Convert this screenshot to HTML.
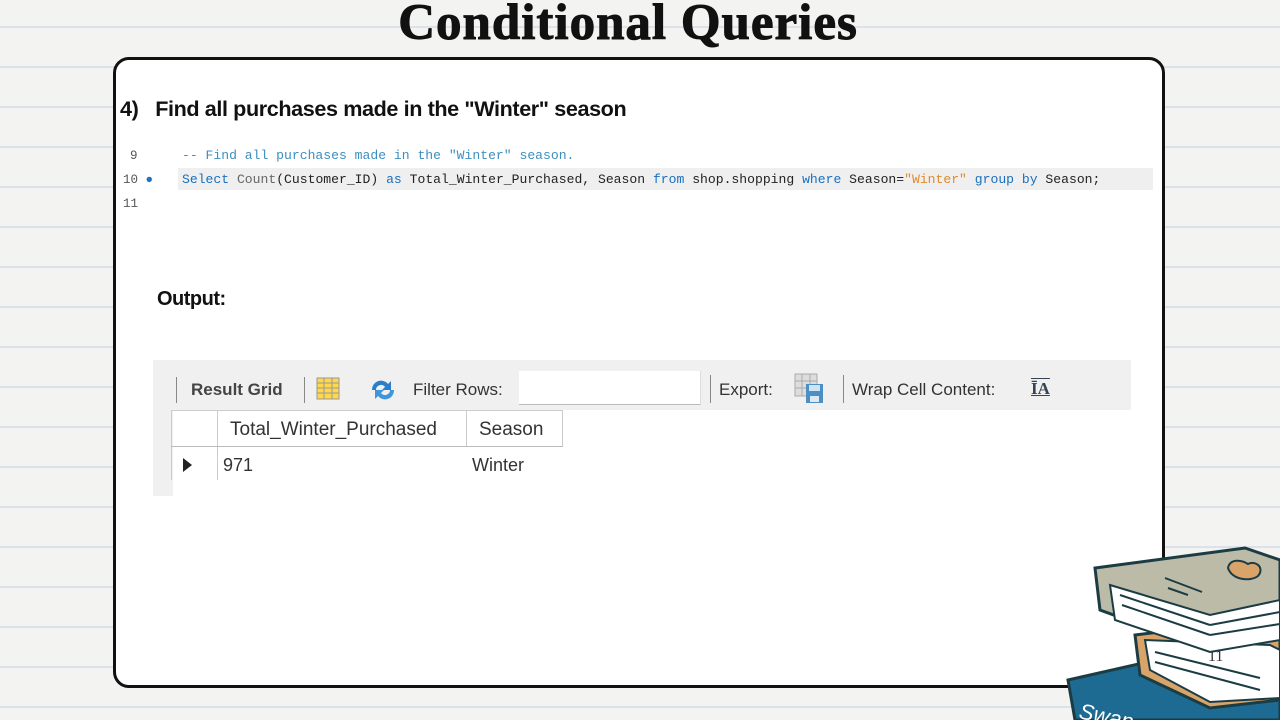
<!DOCTYPE html>
<html><head><meta charset="utf-8"><style>
*{margin:0;padding:0;box-sizing:border-box}
body{width:1280px;height:720px;overflow:hidden;position:relative;background:#f3f3f2;
background-image:repeating-linear-gradient(to bottom,transparent 0,transparent 26px,#dde2ea 26px,#dde2ea 28px,transparent 28px,transparent 40px);font-family:"Liberation Sans",sans-serif}
.t{position:absolute;left:0;width:1256px;text-align:center;top:-6px;font:900 51px "Liberation Serif",serif;color:#111;letter-spacing:1px;-webkit-text-stroke:1px #111}
.card{position:absolute;left:113px;top:57px;width:1052px;height:631px;background:#fff;border:3px solid #111;border-radius:16px}
.h{position:absolute;left:120px;top:96px;font:bold 21.6px "Liberation Sans",sans-serif;color:#111;letter-spacing:-0.4px}
.code{position:absolute;font:13.08px "Liberation Mono",monospace;white-space:pre}
.out{position:absolute;left:157px;top:288px;font:bold 20px "Liberation Sans",sans-serif;color:#111;letter-spacing:-0.5px}
.tb{position:absolute;left:153px;top:360px;width:978px;height:50px;background:#f0f0f0}
.grid{position:absolute;left:153px;top:410px;width:20px;height:86px;background:#f0f0f0}
.txt{position:absolute;font-size:17px;color:#333}
</style></head><body>
<div class="t">Conditional Queries</div>
<div class="card"></div>
<div class="h">4)&nbsp;&nbsp; Find all purchases made in the "Winter" season</div>
<div class="code" style="left:130px;top:149px;color:#555;font-size:12.5px">9</div>
<div class="code" style="left:123px;top:173px;color:#555;font-size:12.5px">10 <span style="color:#1a73c8">●</span></div>
<div class="code" style="left:123px;top:197px;color:#555;font-size:12.5px">11</div>
<div style="position:absolute;left:178px;top:168px;width:975px;height:22px;background:#efefef"></div>
<div class="code" style="left:182px;top:148px;color:#3c8fc0">-- Find all purchases made in the "Winter" season.</div>
<div class="code" style="left:182px;top:172px;color:#222"><span style="color:#1a6fc0">Select</span> <span style="color:#666">Count</span>(Customer_ID) <span style="color:#1a6fc0">as</span> Total_Winter_Purchased, Season <span style="color:#1a6fc0">from</span> shop.shopping <span style="color:#1a6fc0">where</span> Season=<span style="color:#e08a2c">"Winter"</span> <span style="color:#1a6fc0">group by</span> Season;</div>
<div class="out">Output:</div>
<div class="tb"></div>
<div class="grid"></div>
<div style="position:absolute;left:176px;top:377px;width:1px;height:26px;background:#888"></div>
<div class="txt" style="left:191px;top:380px;font-weight:bold;color:#444">Result Grid</div>
<div style="position:absolute;left:304px;top:377px;width:1px;height:26px;background:#888"></div>
<svg style="position:absolute;left:316px;top:377px" width="26" height="24"><rect x="1" y="1" width="22" height="21" fill="#ffd84a" stroke="#999"/><path d="M8 1v21M16 1v21M1 6h22M1 11h22M1 16h22" stroke="#999"/></svg>
<svg style="position:absolute;left:368px;top:378px" width="30" height="24"><path d="M4 12a9 9 0 0 1 16-6l3-3v9h-9l3-3a5 5 0 0 0-9 3z" fill="#2b7fc8"/><path d="M26 12a9 9 0 0 1-16 6l-3 3v-9h9l-3 3a5 5 0 0 0 9-3z" fill="#3f96dc"/></svg>
<div class="txt" style="left:413px;top:380px">Filter Rows:</div>
<div style="position:absolute;left:519px;top:371px;width:182px;height:34px;background:#fff;border-bottom:1px solid #bbb;border-right:1px solid #ddd"></div>
<div style="position:absolute;left:710px;top:375px;width:1px;height:28px;background:#888"></div>
<div class="txt" style="left:719px;top:380px">Export:</div>
<svg style="position:absolute;left:794px;top:373px" width="36" height="32"><rect x="1" y="1" width="22" height="22" fill="#ddd" stroke="#aaa"/><path d="M1 8h22M1 15h22M8 1v22M16 1v22" stroke="#aaa"/><rect x="12" y="11" width="17" height="19" fill="#4b8fc4"/><rect x="15" y="12" width="11" height="6" fill="#cfe3f2"/><rect x="16" y="23" width="9" height="6" fill="#dfe9f2"/></svg>
<div style="position:absolute;left:843px;top:375px;width:1px;height:28px;background:#888"></div>
<div class="txt" style="left:852px;top:380px">Wrap Cell Content:</div>
<div style="position:absolute;left:1031px;top:379px;font:bold 17px 'Liberation Serif',serif;color:#345;text-decoration:underline overline">ĪA</div>
<div style="position:absolute;left:171px;top:410px;width:392px;height:1px;background:#ccc"></div>
<div style="position:absolute;left:171px;top:410px;width:1px;height:70px;background:#ccc"></div>
<div style="position:absolute;left:217px;top:410px;width:1px;height:70px;background:#ccc"></div>
<div style="position:absolute;left:466px;top:410px;width:1px;height:37px;background:#ccc"></div>
<div style="position:absolute;left:562px;top:410px;width:1px;height:37px;background:#ccc"></div>
<div style="position:absolute;left:171px;top:446px;width:392px;height:1px;background:#bbb"></div>
<div class="txt" style="left:230px;top:419px;font-size:19px">Total_Winter_Purchased</div>
<div class="txt" style="left:479px;top:419px;font-size:19px">Season</div>
<div style="position:absolute;left:183px;top:458px;width:0;height:0;border-left:9px solid #222;border-top:7px solid transparent;border-bottom:7px solid transparent"></div>
<div class="txt" style="left:223px;top:455px;font-size:18px">971</div>
<div class="txt" style="left:472px;top:455px;font-size:18px">Winter</div>
<svg style="position:absolute;left:1060px;top:540px" width="220" height="180">
<path d="M8 140 L140 110 L220 118 L220 180 L15 180 Z" fill="#1d6b93" stroke="#1c3c44" stroke-width="3"/>
<text x="18" y="178" font-family="Liberation Sans" font-size="22" fill="#fff" transform="rotate(12 18 178)" font-style="italic">Swan</text>
<path d="M75 95 L200 80 L220 90 L220 160 L150 168 L80 135 Z" fill="#d9a46a" stroke="#1c3c44" stroke-width="3"/>
<path d="M85 100 L210 105 L220 110 L220 158 L150 162 L90 130 Z" fill="#fff" stroke="#1c3c44" stroke-width="2"/>
<path d="M95 112 L200 138 M95 122 L200 150" stroke="#1c3c44" stroke-width="2"/>
<path d="M35 28 L185 8 L220 20 L220 95 L150 110 L40 70 Z" fill="#bcbba8" stroke="#1c3c44" stroke-width="3"/>
<path d="M50 45 L150 75 L220 60 L220 100 L150 112 L55 80 Z" fill="#fff" stroke="#1c3c44" stroke-width="2"/>
<path d="M60 55 L150 85 M62 65 L150 95 M150 85 L220 72 M150 95 L220 84" stroke="#1c3c44" stroke-width="2"/>
<path d="M105 38 L142 52 M108 48 L128 55" stroke="#1c3c44" stroke-width="2"/>
<path d="M168 28 C170 18 182 20 188 24 C196 20 205 28 198 36 C190 42 172 40 168 28 Z" fill="#d9a46a" stroke="#1c3c44" stroke-width="2"/>
</svg>
<div style="position:absolute;left:1208px;top:648px;font:16px 'Liberation Serif',serif;color:#333">11</div>
</body></html>
